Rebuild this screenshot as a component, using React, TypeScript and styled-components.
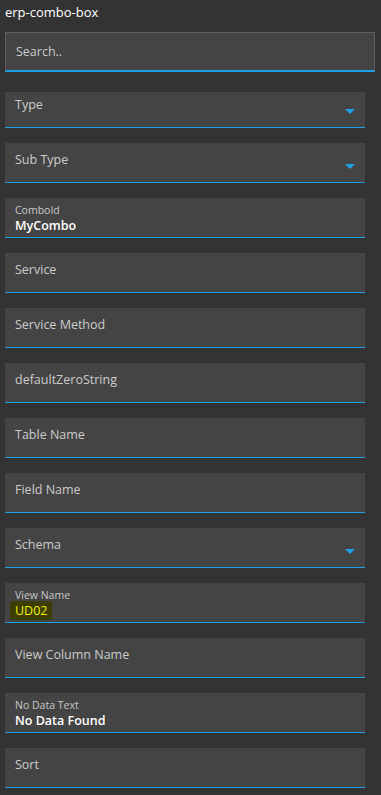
import React from "react"
import styled, { createGlobalStyle } from "styled-components"

const GlobalStyle = createGlobalStyle`
  html, body {
    margin: 0;
    padding: 0;
    background: #333333;
  }
  body {
    font-family: "Open Sans", "Noto Sans", sans-serif;
    color: #e6e6e6;
  }
`

const Panel = styled.div`
  width: 381px;
  height: 795px;
  overflow: hidden;
  background: #333333;
  padding: 3px 16px 0 5px;
  box-sizing: border-box;
`

const Heading = styled.div`
  font-size: 13px;
  line-height: 18px;
  color: #ffffff;
  height: 29px;
`

const SearchBox = styled.div`
  height: 40px;
  margin-right: -10px;
  box-sizing: border-box;
  background: #444444;
  border: 1px solid #5e5e5e;
  border-bottom: 2px solid #1e9fe8;
  padding: 0 10px;
  display: flex;
  align-items: center;
  font-size: 12.5px;
  color: #cccccc;
`

const Fields = styled.div`
  display: flex;
  flex-direction: column;
  gap: 15px;
  margin-top: 20px;
`

const Field = styled.div<{ short?: boolean; filled?: boolean }>`
  position: relative;
  height: ${p => (p.short ? "36px" : "40px")};
  box-sizing: border-box;
  background: #444444;
  border-bottom: 1px solid #1e9fe8;
  padding: ${p => (p.short ? "3px" : p.filled ? "5px" : "7px")} 30px 0 10px;
  display: flex;
  flex-direction: column;
`

const Placeholder = styled.span`
  font-size: 12.5px;
  line-height: 20px;
  color: #cccccc;
`

const SmallLabel = styled.span`
  font-size: 10.5px;
  line-height: 14px;
  color: #c8c8c8;
`

const Value = styled.span`
  font-size: 12.5px;
  line-height: 18px;
  font-weight: 600;
  color: #ffffff;
`

const Marked = styled.span`
  color: #f0f000;
  font-weight: 400;
  background: #3d3d05;
  padding: 1px 5px 1px 5px;
  margin-left: -5px;
  border-radius: 3px;
`

const Caret = styled.span`
  position: absolute;
  right: 10px;
  bottom: 13px;
  width: 0;
  height: 0;
  border-left: 5px solid transparent;
  border-right: 5px solid transparent;
  border-top: 5px solid #1e9fe8;
`

type FieldDef = {
  label: string
  value?: string
  select?: boolean
  short?: boolean
  marked?: boolean
}

const fields: FieldDef[] = [
  { label: "Type", select: true, short: true },
  { label: "Sub Type", select: true },
  { label: "ComboId", value: "MyCombo" },
  { label: "Service" },
  { label: "Service Method" },
  { label: "defaultZeroString" },
  { label: "Table Name" },
  { label: "Field Name" },
  { label: "Schema", select: true },
  { label: "View Name", value: "UD02", marked: true },
  { label: "View Column Name" },
  { label: "No Data Text", value: "No Data Found" },
  { label: "Sort" },
]

const App = () => (
  <>
    <GlobalStyle />
    <Panel>
      <Heading>erp-combo-box</Heading>
      <SearchBox>Search..</SearchBox>
      <Fields>
        {fields.map(f => (
          <Field key={f.label} short={f.short} filled={!!f.value}>
            {f.value ? (
              <>
                <SmallLabel>{f.label}</SmallLabel>
                <Value>{f.marked ? <Marked>{f.value}</Marked> : f.value}</Value>
              </>
            ) : (
              <Placeholder>{f.label}</Placeholder>
            )}
            {f.select && <Caret />}
          </Field>
        ))}
      </Fields>
    </Panel>
  </>
)

export default App
